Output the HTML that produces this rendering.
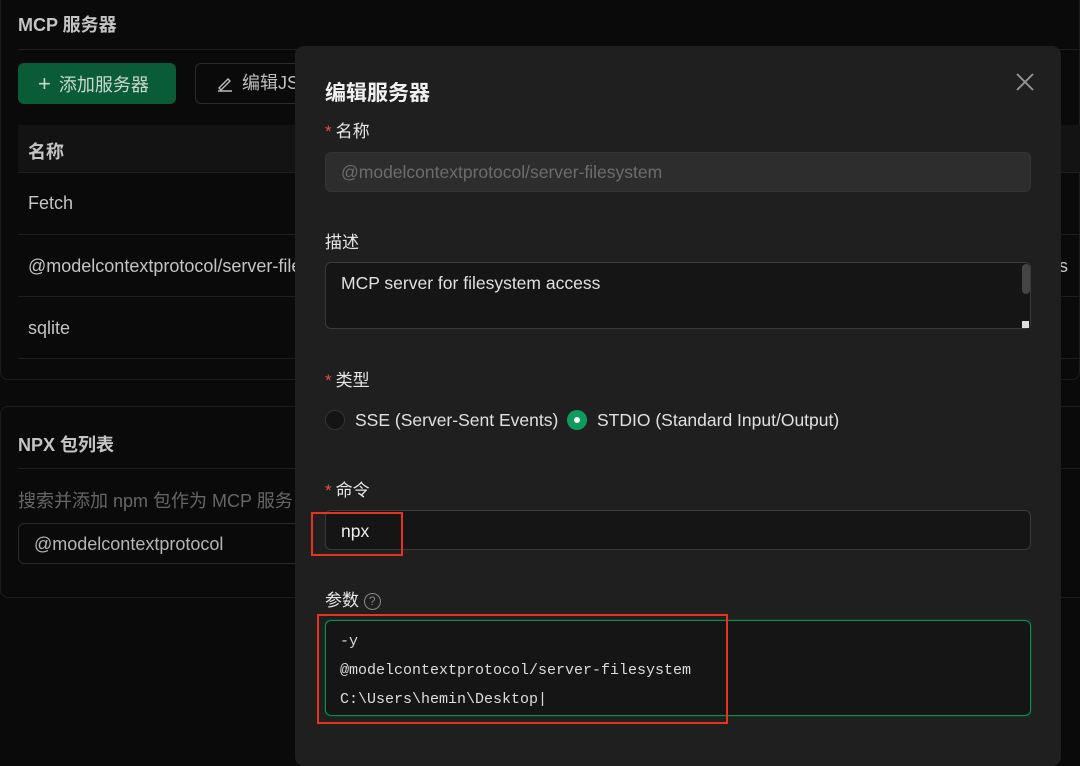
<!DOCTYPE html>
<html><head><meta charset="utf-8"><style>
*{box-sizing:border-box;margin:0;padding:0}
body{width:1080px;height:747px;overflow:hidden;background:#0a0a0a;font-family:"Liberation Sans","Noto Sans CJK SC",sans-serif;color:#d9d9d9;position:relative}
.a{position:absolute}
.t{color:#c4c4c4;font-size:18px}
.hr{position:absolute;left:18px;width:1062px;height:1px;background:#1e1e1e}
.lab{position:absolute;left:325px;font-size:17px;color:#e6e6e6}
.lab i{color:#d9534f;font-style:normal;margin-right:4px}
.inp{position:absolute;left:325px;width:706px;border:1px solid #3a3a3a;border-radius:6px;background:#151515}
</style></head><body>
<div class="a" style="left:0;top:-10px;width:1080px;height:390px;border:1px solid #1c1c1c;border-radius:8px"></div>
<div class="a" style="left:18px;top:11px;font-size:18px;font-weight:bold;color:#c4c4c4">MCP 服务器</div>
<div class="hr" style="top:49px"></div>
<div class="a" style="left:18px;top:63px;width:158px;height:41px;background:#0a5c37;border-radius:6px;color:#c8d8cf;font-size:18px;line-height:41px;padding-left:20px"><span style="font-size:22px;font-weight:300;margin-right:8px">+</span>添加服务器</div>
<div class="a" style="left:195px;top:63px;width:200px;height:41px;border:1px solid #2a2a2a;border-radius:6px;color:#bdbdbd;font-size:18px;line-height:39px;padding-left:20px"><svg width="18" height="18" viewBox="0 0 18 18" style="vertical-align:-3px;margin-right:8px"><path d="M3 14 L12 5 L14 7 L5 16 Z M2 17 H16" stroke="#bbb" stroke-width="1.4" fill="none"/></svg>编辑JSON</div>
<div class="a" style="left:18px;top:125px;width:1062px;height:47px;background:#131313"></div>
<div class="a t" style="left:28px;top:138px;font-weight:bold">名称</div>
<div class="hr" style="top:172px"></div>
<div class="a t" style="left:28px;top:193px">Fetch</div>
<div class="hr" style="top:234px"></div>
<div class="a t" style="left:28px;top:256px">@modelcontextprotocol/server-filesystem</div>
<div class="a t" style="left:1040px;top:256px">ol/s</div>
<div class="hr" style="top:296px"></div>
<div class="a t" style="left:28px;top:318px">sqlite</div>
<div class="hr" style="top:358px"></div>

<div class="a" style="left:0;top:406px;width:1090px;height:192px;border:1px solid #1c1c1c;border-radius:8px"></div>
<div class="a" style="left:18px;top:431px;font-size:18px;font-weight:bold;color:#c4c4c4">NPX 包列表</div>
<div class="hr" style="top:468px"></div>
<div class="a" style="left:18px;top:487px;font-size:18px;color:#666">搜索并添加 npm 包作为 MCP 服务</div>
<div class="a" style="left:18px;top:523px;width:400px;height:41px;border:1px solid #2a2a2a;border-radius:6px;font-size:18px;line-height:40px;padding-left:15px;color:#b5b5b5">@modelcontextprotocol</div>

<div class="a" style="left:295px;top:46px;width:766px;height:720px;background:#1f1f1f;border-radius:9px"></div>
<div class="a" style="left:325px;top:77px;font-size:21px;font-weight:bold;color:#f0f0f0">编辑服务器</div>
<svg class="a" style="left:1016px;top:73px" width="18" height="18"><path d="M1 1L17 17M17 1L1 17" stroke="#999" stroke-width="1.8"/></svg>
<div class="lab" style="top:117px"><i>*</i>名称</div>
<div class="inp" style="top:152px;height:40px;background:#2d2d2d;border-color:#343434;color:#6c6c6c;font-size:17.5px;line-height:38px;padding-left:15px">@modelcontextprotocol/server-filesystem</div>
<div class="lab" style="top:228px">描述</div>
<div class="inp" style="top:262px;height:67px;font-size:17.5px;padding:10px 15px;color:#e0e0e0">MCP server for filesystem access</div>
<div class="a" style="left:1022px;top:264px;width:8px;height:30px;background:#444;border-radius:4px"></div>
<div class="a" style="left:1022px;top:321px;width:7px;height:7px;background:#ddd"></div>
<div class="lab" style="top:366px"><i>*</i>类型</div>
<div class="a" style="left:325px;top:410px;width:20px;height:20px;border-radius:50%;background:#141414;border:1px solid #333"></div>
<div class="a" style="left:355px;top:410px;font-size:17.5px;color:#e0e0e0">SSE (Server-Sent Events)</div>
<div class="a" style="left:567px;top:410px;width:20px;height:20px;border-radius:50%;background:#0d9c5d"></div>
<div class="a" style="left:574px;top:417px;width:6px;height:6px;border-radius:50%;background:#fff"></div>
<div class="a" style="left:597px;top:410px;font-size:17.5px;color:#e0e0e0">STDIO (Standard Input/Output)</div>
<div class="lab" style="top:476px"><i>*</i>命令</div>
<div class="inp" style="top:510px;height:40px;font-size:17.5px;line-height:40px;padding-left:15px;color:#eee">npx</div>
<div class="a" style="left:311px;top:512px;width:92px;height:44px;border:2px solid #e8331f"></div>
<div class="lab" style="top:586px">参数 <span style="display:inline-block;width:17px;height:17px;border:1px solid #888;border-radius:50%;font-size:12px;line-height:15px;text-align:center;color:#888;vertical-align:1px">?</span></div>
<div class="inp" style="top:620px;height:96px;border-color:#0f8a52;box-shadow:0 0 0 1px #0b3a25;font-family:'Liberation Mono',monospace;font-size:15px;line-height:29px;padding:6px 14px;color:#ddd;letter-spacing:0">-y<br>@modelcontextprotocol/server-filesystem<br>C:\Users\hemin\Desktop|</div>
<div class="a" style="left:317px;top:614px;width:411px;height:110px;border:2px solid #e8331f"></div>
</body></html>
